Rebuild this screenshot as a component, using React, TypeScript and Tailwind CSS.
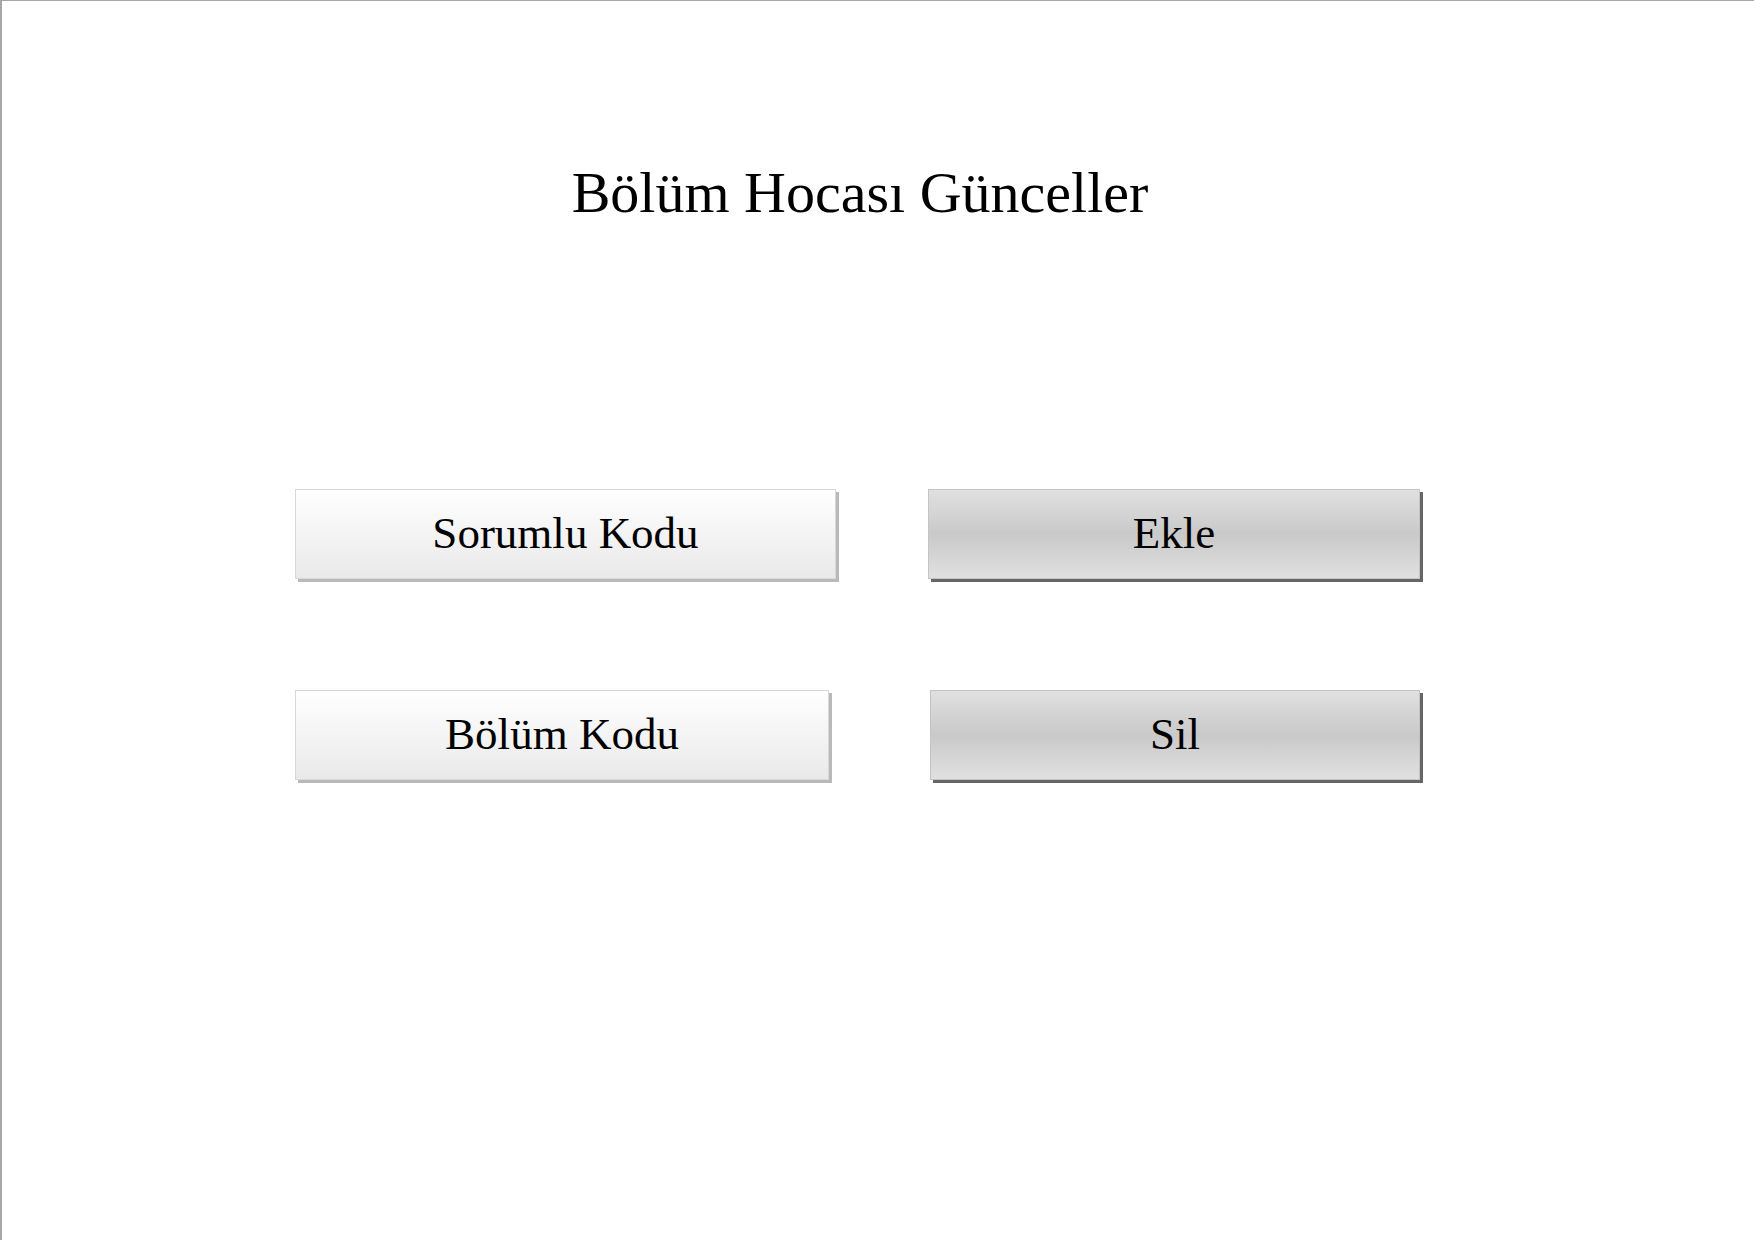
import React from "react";

const serif = { fontFamily: '"Liberation Serif", "Times New Roman", serif' };

function LightBtn({ label, w }: { label: string; w: string }) {
  return (
    <div
      className={`${w} h-[90px] flex items-center justify-center border border-[#d8d8d8] bg-gradient-to-b from-[#ffffff] to-[#e9e9e9] shadow-[3px_3px_0_#b9b9b9] text-[45px] text-black leading-none`}
    >
      <span className="pb-[2px]">{label}</span>
    </div>
  );
}

function DarkBtn({ label, w }: { label: string; w: string }) {
  return (
    <div
      className={`${w} h-[90px] flex items-center justify-center border border-[#c4c4c4] bg-[linear-gradient(to_bottom,#e0e0e0_0%,#c9c9c9_50%,#e0e0e0_100%)] shadow-[3px_3px_0_#666666] text-[45px] text-black leading-none`}
    >
      <span className="pb-[2px]">{label}</span>
    </div>
  );
}

export default function App() {
  return (
    <div
      className="w-[1754px] h-[1240px] bg-white border-t border-l-2 border-[#a6a6a6] flex flex-col pl-[293px]"
      style={serif}
    >
      <div className="w-[1130px] text-center text-[58px] leading-none text-black pt-[163px]">
        Bölüm Hocası Günceller
      </div>
      <div className="mt-[267px] flex flex-col gap-[111px]">
        <div className="flex gap-[92px]">
          <LightBtn label="Sorumlu Kodu" w="w-[541px]" />
          <DarkBtn label="Ekle" w="w-[492px]" />
        </div>
        <div className="flex">
          <LightBtn label="Bölüm Kodu" w="w-[534px]" />
          <div className="w-[101px]" />
          <DarkBtn label="Sil" w="w-[490px]" />
        </div>
      </div>
    </div>
  );
}
